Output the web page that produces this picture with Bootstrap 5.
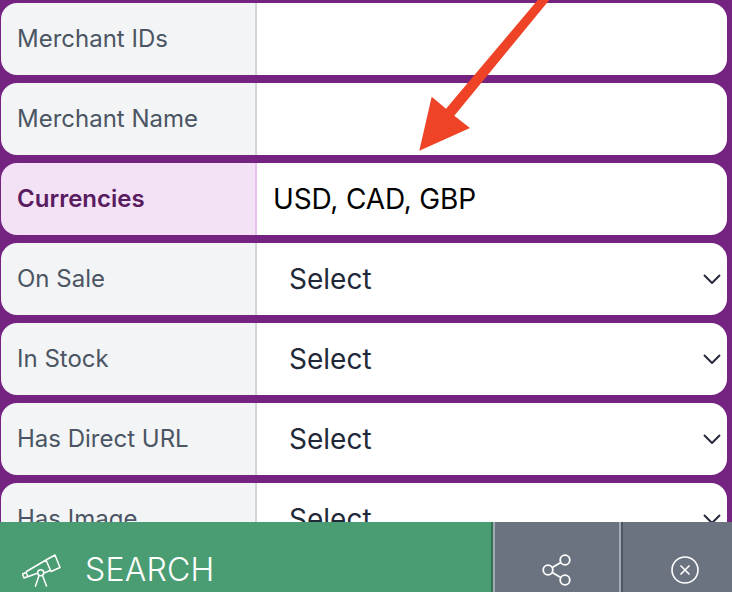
<!DOCTYPE html>
<html lang="en">
<head>
  <meta charset="UTF-8">
  <meta name="viewport" content="width=device-width, initial-scale=1.0">
  <title>Search filters</title>
  <link href="https://cdn.jsdelivr.net/npm/bootstrap@5.3.2/dist/css/bootstrap.min.css" rel="stylesheet">
  <style>
    html, body { height: 100%; overflow: hidden; }
    body { background: #742380; font-family: Inter, "Liberation Sans", sans-serif; }
    .filter-list { padding: 3px 5px 0 1px; gap: 8px; }
    .filter-row { height: 72px; flex-wrap: nowrap; }
    .filter-row .input-group-text {
      flex: 0 0 256px; width: 256px; height: 72px; padding: 0 0 0 16px;
      background: #f3f4f6; color: #4b5563; font-size: 24px; line-height: 1;
      border: 0; border-right: 2px solid #d1d5db; border-radius: 16px 0 0 16px;
    }
    .filter-row .form-control, .filter-row .form-select {
      height: 72px; margin-left: 0 !important; border: 0; border-radius: 0 16px 16px 0; box-shadow: none;
      font-size: 28px; font-family: inherit; background-color: #fff;
    }
    .filter-row .form-control { padding: 0 16px; color: #000; letter-spacing: -.15px; }
    .filter-row .form-select {
      padding: 0 40px 0 32px; color: #1f2937;
      background-image: url("data:image/svg+xml,%3csvg xmlns='http://www.w3.org/2000/svg' viewBox='0 0 18 10'%3e%3cpath fill='none' stroke='%23252b3b' stroke-width='2' d='M1 1l8 8 8-8'/%3e%3c/svg%3e");
      background-position: right 6px center; background-size: 18px 10px;
    }
    .filter-active .input-group-text {
      background: #f3e1f6; color: #581c5f; font-weight: 600; border-right-color: #e6c3ee;
    }
    .pointer-arrow { position: fixed; top: 0; left: 0; pointer-events: none; }
    .action-bar { position: fixed; left: 0; right: 0; top: 522px; height: 96px; }
    .action-bar .btn { border: 0; border-radius: 0; height: 96px; color: #fff; }
    .btn-search {
      width: 495px; background: #4a9d72; font-size: 32px; font-weight: 300; letter-spacing: .2px;
      padding: 0 0 0 22px; gap: 23px;
      border-right: 2px solid #a4aab3 !important;
      box-shadow: inset -2px 0 0 #33734f;
    }
    .btn-tool { background: #6b7280; padding: 0; }
    .btn-share { width: 126px; border-right: 2px solid #a4aab3 !important; }
    .btn-clear { flex: 1; padding-left: 15px; border-left: 2px solid #4b5563 !important; }
    .action-bar .btn:hover { color: #fff; }
  </style>
</head>
<body>
  <form class="filter-list d-flex flex-column">
    <div class="input-group filter-row">
      <label class="input-group-text" for="merchantIds">Merchant IDs</label>
      <input type="text" class="form-control" id="merchantIds">
    </div>
    <div class="input-group filter-row">
      <label class="input-group-text" for="merchantName">Merchant Name</label>
      <input type="text" class="form-control" id="merchantName">
    </div>
    <div class="input-group filter-row filter-active">
      <label class="input-group-text" for="currencies">Currencies</label>
      <input type="text" class="form-control" id="currencies" value="USD, CAD, GBP">
    </div>
    <div class="input-group filter-row">
      <label class="input-group-text" for="onSale">On Sale</label>
      <select class="form-select" id="onSale"><option>Select</option></select>
    </div>
    <div class="input-group filter-row">
      <label class="input-group-text" for="inStock">In Stock</label>
      <select class="form-select" id="inStock"><option>Select</option></select>
    </div>
    <div class="input-group filter-row">
      <label class="input-group-text" for="directUrl">Has Direct URL</label>
      <select class="form-select" id="directUrl"><option>Select</option></select>
    </div>
    <div class="input-group filter-row">
      <label class="input-group-text" for="hasImage">Has Image</label>
      <select class="form-select" id="hasImage"><option>Select</option></select>
    </div>
  </form>

  <svg class="pointer-arrow" width="732" height="160" viewBox="0 0 732 160">
    <polygon fill="#ee4326" points="537.7,0 549.3,0 454.3,115.7 470,128 419.3,150.7 431.7,96.7 446,108.7"/>
  </svg>

  <div class="action-bar d-flex">
    <button type="button" class="btn btn-search d-flex align-items-center">
      <svg width="40" height="33" viewBox="0 0 40 33" fill="none" stroke="#fff" stroke-width="1.500" stroke-linejoin="round" stroke-linecap="round">
        <path d="M.5 20L4 18.500 6 22.500 2 24zM4.500 17.500L24 6M6.500 22.500l8-3M22 19l6-2.500M24 6l9-5 5 12.500-9 4z"/>
        <circle cx="18.700" cy="18.700" r="3"/>
        <path d="M17 21.500L13.500 32M20.500 21.500L24.500 32"/>
      </svg>
      <span>SEARCH</span>
    </button>
    <button type="button" class="btn btn-tool btn-share d-flex align-items-center justify-content-center" aria-label="Share">
      <svg width="30" height="32" viewBox="0 0 30 32" fill="none" stroke="#fff" stroke-width="1.800">
        <circle cx="23" cy="6" r="4.800"/><circle cx="6" cy="16" r="4.800"/><circle cx="23" cy="26" r="4.800"/>
        <path d="M10.200 13.600l8.600-5.200M10.200 18.400l8.600 5.200"/>
      </svg>
    </button>
    <button type="button" class="btn btn-tool btn-clear d-flex align-items-center justify-content-center" aria-label="Clear">
      <svg width="28" height="28" viewBox="0 0 28 28" fill="none" stroke="#fff" stroke-width="1.600">
        <circle cx="14" cy="14" r="13"/><path d="M9.500 9.500l9 9M18.500 9.500l-9 9"/>
      </svg>
    </button>
  </div>
  <script src="https://cdn.jsdelivr.net/npm/bootstrap@5.3.2/dist/js/bootstrap.bundle.min.js"></script>
</body>
</html>
